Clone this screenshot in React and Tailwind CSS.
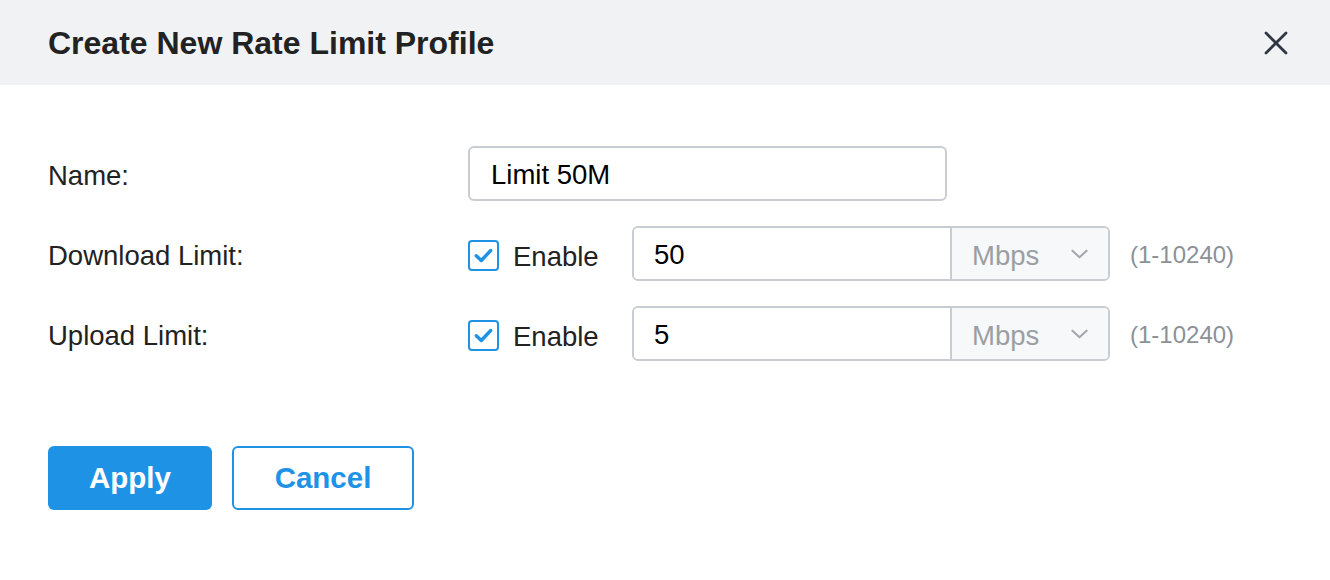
import React, { useState } from "react";

const CheckIcon = () => (
  <svg viewBox="0 0 16 16" className="w-[21px] h-[21px]" fill="none">
    <path d="M2.5 8.2 L6.3 11.8 L13.5 4.2" stroke="#1e93e6" strokeWidth="2.6" strokeLinecap="round" strokeLinejoin="round" />
  </svg>
);

const Chevron = () => (
  <svg viewBox="0 0 18 10" className="w-[17px] h-[10px]" fill="none">
    <path d="M1.5 1.5 L9 8.5 L16.5 1.5" stroke="#a3a8ae" strokeWidth="2.2" strokeLinecap="round" strokeLinejoin="round" />
  </svg>
);

const LimitRow = ({ label, value, onChange, enabled, onToggle }) => (
  <div className="flex items-center h-[55px]">
    <div className="w-[420px] pt-[5px] text-[27.5px] text-[#222]">{label}</div>
    <button
      type="button"
      onClick={onToggle}
      className="flex items-center justify-center w-[31px] h-[31px] mt-[3px] border-2 border-[#1e93e6] rounded-[4px] bg-white"
    >
      {enabled && <CheckIcon />}
    </button>
    <span className="ml-[14px] pt-[6px] text-[27.5px] text-[#222] w-[119px]">Enable</span>
    <div className="flex w-[478px] h-[55px] border-2 border-[#c9ccd0] rounded-[6px] overflow-hidden">
      <input
        value={value}
        onChange={onChange}
        className="flex-1 min-w-0 px-[20px] pt-[3px] text-[27.5px] text-black outline-none bg-white"
      />
      <div className="flex items-center justify-between w-[158px] border-l-2 border-[#c9ccd0] bg-[#f7f8f9] pl-[20px] pr-[20px]">
        <span className="pt-[4px] text-[27.5px] text-[#9a9fa5]">Mbps</span>
        <Chevron />
      </div>
    </div>
    <span className="ml-[20px] pt-[3px] text-[24px] text-[#8c9197]">(1-10240)</span>
  </div>
);

export default function App() {
  const [name, setName] = useState("Limit 50M");
  const [down, setDown] = useState("50");
  const [up, setUp] = useState("5");
  const [downOn, setDownOn] = useState(true);
  const [upOn, setUpOn] = useState(true);

  return (
    <div className="w-[1330px] h-[580px] bg-white" style={{ fontFamily: '"Liberation Sans", Arial, sans-serif' }}>
      <div className="flex items-center justify-between h-[85px] bg-[#f1f2f4] pl-[48px] pr-[42px]">
        <h2 className="text-[32px] font-bold text-[#222]">Create New Rate Limit Profile</h2>
        <button type="button" className="w-[24px] h-[24px] flex items-center justify-center">
          <svg viewBox="0 0 24 24" className="w-[24px] h-[24px]" fill="none">
            <path d="M2 2 L22 22 M22 2 L2 22" stroke="#2f3744" strokeWidth="2.8" strokeLinecap="round" />
          </svg>
        </button>
      </div>

      <div className="pl-[48px] pt-[61px]">
        <div className="flex items-center h-[55px]">
          <div className="w-[420px] pt-[5px] text-[27.5px] text-[#222]">Name:</div>
          <input
            value={name}
            onChange={(e) => setName(e.target.value)}
            className="w-[479px] h-[55px] border-2 border-[#c9ccd0] rounded-[6px] px-[21px] pt-[3px] text-[27.5px] text-black outline-none"
          />
        </div>
        <div className="mt-[25px] flex flex-col gap-[25px]">
          <LimitRow label="Download Limit:" value={down} onChange={(e) => setDown(e.target.value)} enabled={downOn} onToggle={() => setDownOn(!downOn)} />
          <LimitRow label="Upload Limit:" value={up} onChange={(e) => setUp(e.target.value)} enabled={upOn} onToggle={() => setUpOn(!upOn)} />
        </div>
        <div className="flex gap-[20px] mt-[85px]">
          <button type="button" className="w-[164px] h-[64px] rounded-[6px] bg-[#1e93e6] text-white text-[29.5px] font-bold">
            Apply
          </button>
          <button type="button" className="w-[182px] h-[64px] rounded-[6px] border-2 border-[#1e93e6] bg-white text-[#1e93e6] text-[29.5px] font-bold">
            Cancel
          </button>
        </div>
      </div>
    </div>
  );
}
